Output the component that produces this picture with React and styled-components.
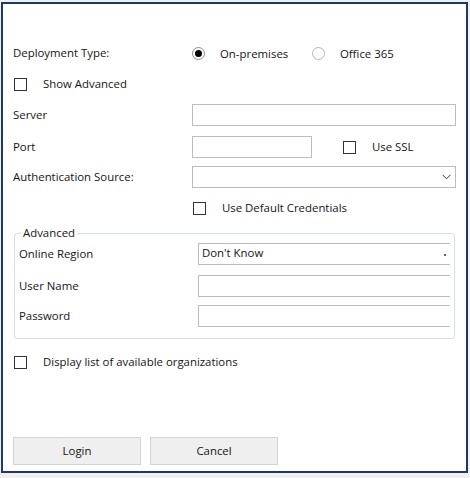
import React from "react";
import styled, { createGlobalStyle } from "styled-components";

const Global = createGlobalStyle`
  html, body { margin: 0; padding: 0; background: #f0f0f0; }
  body { font-family: "Open Sans", "Noto Sans", sans-serif; font-size: 11.4px; color: #141414; }
  * { box-sizing: border-box; }
`;

const Window = styled.div`
  margin: 2px 0 0 1px;
  width: 467px;
  height: 471px;
  border: 2px solid #1f3864;
  background: #fff;
  display: flex;
  flex-direction: column;
  padding: 0 0 6px 10px;
`;

const Row = styled.div`
  display: flex;
  align-items: center;
  height: ${(p) => p.$h || 20}px;
  margin-top: ${(p) => p.$mt || 0}px;
  margin-left: ${(p) => p.$ml || 0}px;
`;

const Label = styled.div`
  width: ${(p) => p.$w || 179}px;
  flex: none;
  white-space: nowrap;
  margin-top: -1px;
`;

const RadioOption = styled.label`
  display: flex;
  align-items: center;
  gap: 15px;
  width: ${(p) => p.$w || "auto"};
`;

const RadioCircle = styled.span`
  width: 13px;
  height: 13px;
  border-radius: 50%;
  border: 1px solid ${(p) => (p.$on ? "#8a8a8a" : "#b5b5b5")};
  background: #fff;
  display: flex;
  align-items: center;
  justify-content: center;
  flex: none;
  &::after {
    content: "";
    display: ${(p) => (p.$on ? "block" : "none")};
    width: 7px;
    height: 7px;
    border-radius: 50%;
    background: #000;
  }
`;

const CheckOption = styled.label`
  display: flex;
  align-items: center;
  gap: 16px;
  margin-left: ${(p) => p.$ml || 0}px;
  & > span:last-child { margin-top: -2px; }
`;

const Box = styled.span`
  width: 13px;
  height: 13px;
  border: 1px solid #333;
  background: #fff;
  flex: none;
`;

const Input = styled.div`
  width: ${(p) => p.$w}px;
  height: 22px;
  border: 1px solid #bcbcbc;
  border-right: ${(p) => (p.$open ? "none" : "1px solid #bcbcbc")};
  background: #fff;
  display: flex;
  align-items: center;
  justify-content: space-between;
  padding: 0 4px 0 3px;
  flex: none;
`;

const Value = styled.span`
  margin-top: -3px;
`;

const Group = styled.fieldset`
  margin: 8px 0 0 1px;
  width: 441px;
  padding: 0 0 11px 4px;
  border: 1px solid #d5dfe5;
  border-radius: 3px;
  min-width: 0;
`;

const Legend = styled.legend`
  margin-left: 2px;
  padding: 0 2px;
  line-height: 14px;
`;

const Buttons = styled.div`
  margin-top: auto;
  display: flex;
  gap: 9px;
`;

const Button = styled.button`
  width: 128px;
  height: 28px;
  border: 1px solid #d4d4d4;
  background: #efefef;
  font: inherit;
  color: #141414;
  padding: 0 0 1px;
`;

const Chevron = () => (
  <svg width="9" height="6" viewBox="0 0 9 6">
    <path d="M0.5 0.8 L4.5 4.8 L8.5 0.8" fill="none" stroke="#333" strokeWidth="1" />
  </svg>
);

const Tick = styled.span`
  width: 2px;
  height: 2px;
  background: #666;
  margin-top: 2px;
`;

export default function App() {
  return (
    <>
      <Global />
      <Window>
        <Row $mt={39}>
          <Label>Deployment Type:</Label>
          <RadioOption $w="120px">
            <RadioCircle $on />
            <span>On-premises</span>
          </RadioOption>
          <RadioOption>
            <RadioCircle />
            <span>Office 365</span>
          </RadioOption>
        </Row>
        <Row $mt={11}>
          <CheckOption $ml={1}>
            <Box />
            <span>Show Advanced</span>
          </CheckOption>
        </Row>
        <Row $h={22} $mt={10}>
          <Label>Server</Label>
          <Input $w={264} />
        </Row>
        <Row $h={22} $mt={10}>
          <Label>Port</Label>
          <Input $w={120} />
          <CheckOption $ml={31}>
            <Box />
            <span>Use SSL</span>
          </CheckOption>
        </Row>
        <Row $h={22} $mt={8}>
          <Label>Authentication Source:</Label>
          <Input $w={264}>
            <span />
            <Chevron />
          </Input>
        </Row>
        <Row $mt={10}>
          <Label />
          <CheckOption $ml={1}>
            <Box />
            <span>Use Default Credentials</span>
          </CheckOption>
        </Row>
        <Group>
          <Legend>Advanced</Legend>
          <Row $h={22} $mt={3}>
            <Label>Online Region</Label>
            <Input $w={252} $open>
              <Value>Don't Know</Value>
              <Tick />
            </Input>
          </Row>
          <Row $h={22} $mt={10}>
            <Label>User Name</Label>
            <Input $w={252} $open />
          </Row>
          <Row $h={22} $mt={8}>
            <Label>Password</Label>
            <Input $w={252} $open />
          </Row>
        </Group>
        <Row $mt={13}>
          <CheckOption $ml={1}>
            <Box />
            <span>Display list of available organizations</span>
          </CheckOption>
        </Row>
        <Buttons>
          <Button>Login</Button>
          <Button>Cancel</Button>
        </Buttons>
      </Window>
    </>
  );
}
